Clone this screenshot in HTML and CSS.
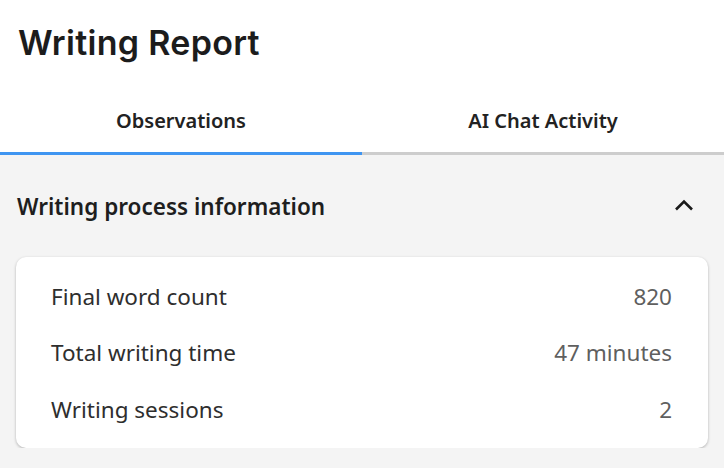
FILE: index.html
```html
<!DOCTYPE html>
<html lang="en">

<head>
    <meta charset="UTF-8">
    <meta name="viewport" content="width=device-width, initial-scale=1.0">
    <title>Writing Report</title>
    <link rel="stylesheet" href="styles.css">
</head>

<body>
    <header class="report-header">
        <h1>Writing Report</h1>
    </header>

    <nav class="tabs">
        <div class="tab active">Observations</div>
        <div class="tab">AI Chat Activity</div>
    </nav>

    <main class="panel">
        <div class="section-head">
            <h2>Writing process information</h2>
            <svg class="chevron" width="26" height="26" viewBox="0 0 26 26">
                <path d="M5 16.5l8-8 8 8" fill="none" stroke="#1a1a1a" stroke-width="2.6" />
            </svg>
        </div>

        <div class="card">
            <div class="row">
                <span class="label">Final word count</span>
                <span class="value">820</span>
            </div>
            <div class="row">
                <span class="label">Total writing time</span>
                <span class="value">47 minutes</span>
            </div>
            <div class="row">
                <span class="label">Writing sessions</span>
                <span class="value">2</span>
            </div>
        </div>
    </main>
</body>

</html>
```

FILE: styles.css
```css
* {
    margin: 0px;
    padding: 0px;
    box-sizing: border-box;
}

body {
    background-color: #f4f4f4;
    font-family: "Noto Sans", "Open Sans", sans-serif;
    color: #222;
}

.report-header {
    background-color: white;
    height: 90px;
    padding: 21px 18px 0px;
}

h1 {
    font-family: "Inter", "Noto Sans", sans-serif;
    font-size: 34px;
    font-weight: 600;
    letter-spacing: 0.3px;
    color: #1c1c1c;
    line-height: 44px;
}

.tabs {
    display: flex;
    background-color: white;
}

.tab {
    flex: 1;
    height: 65px;
    line-height: 62px;
    text-align: center;
    font-size: 20px;
    font-weight: 600;
    color: #222;
    border-bottom: 3px solid #cdcdcd;
}

.tab.active {
    border-bottom-color: #3f95f1;
}

.panel {
    padding: 0px 16px;
}

.section-head {
    display: flex;
    justify-content: space-between;
    align-items: center;
    height: 102px;
    padding-left: 1px;
    padding-right: 11px;
}

h2 {
    font-size: 22.5px;
    font-weight: 600;
    color: #1e1e1e;
}

.card {
    background-color: white;
    border-radius: 10px;
    box-shadow: 0px 1px 3px rgba(0, 0, 0, 0.28);
    padding: 11px 36px 10px 35px;
}

.row {
    display: flex;
    justify-content: space-between;
    align-items: center;
    height: 56.5px;
    font-size: 22.5px;
}

.label {
    color: #2e2e2e;
}

.value {
    color: #5f5f5f;
}
```
